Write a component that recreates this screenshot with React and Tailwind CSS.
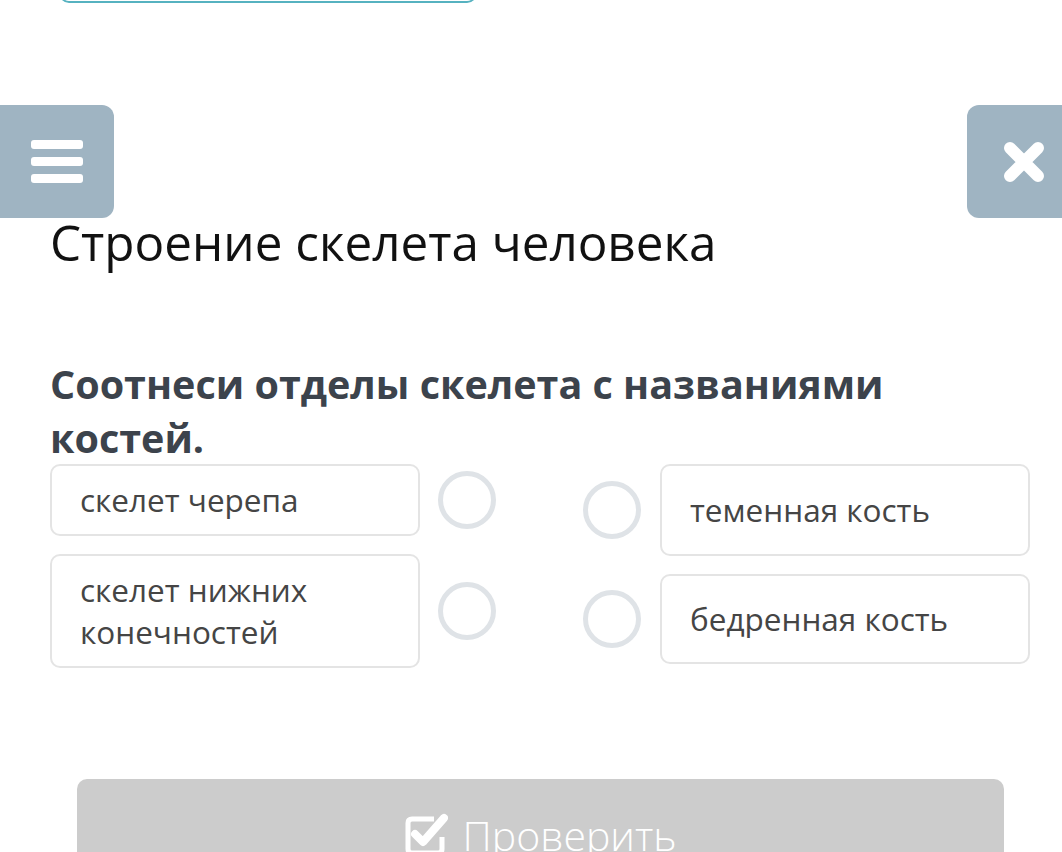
import React from "react";

function Row({ text, left, h }) {
  const box = (
    <div
      className={`w-[370px] border-2 border-[#e4e4e4] rounded-[10px] px-[28px] text-[31.5px] leading-[42px] text-[#454545] flex items-center ${h}`}
    >
      {text}
    </div>
  );
  const circle = (
    <div className="w-[58px] h-[58px] rounded-full border-[5px] border-[#dfe3e7] shrink-0" />
  );
  return left ? (
    <div className="flex items-center gap-[18px]">
      {box}
      {circle}
    </div>
  ) : (
    <div className="flex items-center gap-[19px]">
      {circle}
      {box}
    </div>
  );
}

export default function App() {
  return (
    <div className="w-[1062px] h-[852px] overflow-hidden bg-white font-['Open_Sans',sans-serif]">
      <div className="h-[3px] overflow-hidden ml-[59px] w-[418px]">
        <div className="h-[40px] -mt-[37px] border-2 border-[#56b2c0] rounded-[10px]" />
      </div>
      <div className="mt-[102px] h-[113px] flex justify-between">
        <div className="w-[114px] h-full bg-[#9fb4c2] rounded-r-[12px] flex flex-col justify-center items-center gap-[8px]">
          <div className="w-[52px] h-[9px] rounded-[3px] bg-white" />
          <div className="w-[52px] h-[9px] rounded-[3px] bg-white" />
          <div className="w-[52px] h-[9px] rounded-[3px] bg-white" />
        </div>
        <div className="w-[95px] h-full bg-[#9fb4c2] rounded-l-[12px] flex items-center justify-center pl-[19px]">
          <svg width="44" height="44" viewBox="0 0 44 44">
            <path d="M8 8 L36 36 M36 8 L8 36" stroke="white" strokeWidth="12" strokeLinecap="round" />
          </svg>
        </div>
      </div>
      <h1 className="px-[50px] text-[49.4px] leading-[48px] text-[#111] font-normal">
        Строение скелета человека
      </h1>
      <p className="mt-[91px] px-[50px] w-[960px] text-[39.5px] leading-[54px] font-bold text-[#3c434c]">
        Соотнеси отделы скелета с названиями костей.
      </p>
      <div className="-mt-[1px] pl-[50px] pr-[32px] flex justify-between">
        <div className="flex flex-col gap-[18px]">
          <Row left text="скелет черепа" h="py-[13px]" />
          <Row left text={<span>скелет нижних<br />конечностей</span>} h="py-[13px]" />
        </div>
        <div className="flex flex-col gap-[18px]">
          <Row text="теменная кость" h="py-[23px]" />
          <Row text="бедренная кость" h="py-[22px]" />
        </div>
      </div>
      <div className="mt-[111px] mx-[77px] w-[927px] h-[100px] bg-[#cccccc] rounded-[10px] flex justify-center items-start pt-[26px] gap-[14px] text-white">
        <svg width="44" height="46" viewBox="0 0 44 46" className="mt-[4px]">
          <path
            d="M30 10 H8 Q4 10 4 14 V40 Q4 44 8 44 H34 Q38 44 38 40 V28"
            fill="none"
            stroke="white"
            strokeWidth="5"
          />
          <path d="M11 25 L19 33 L40 9" fill="none" stroke="white" strokeWidth="8" strokeLinecap="round" strokeLinejoin="round" />
        </svg>
        <span className="text-[41px] leading-[60px] font-light">Проверить</span>
      </div>
    </div>
  );
}
